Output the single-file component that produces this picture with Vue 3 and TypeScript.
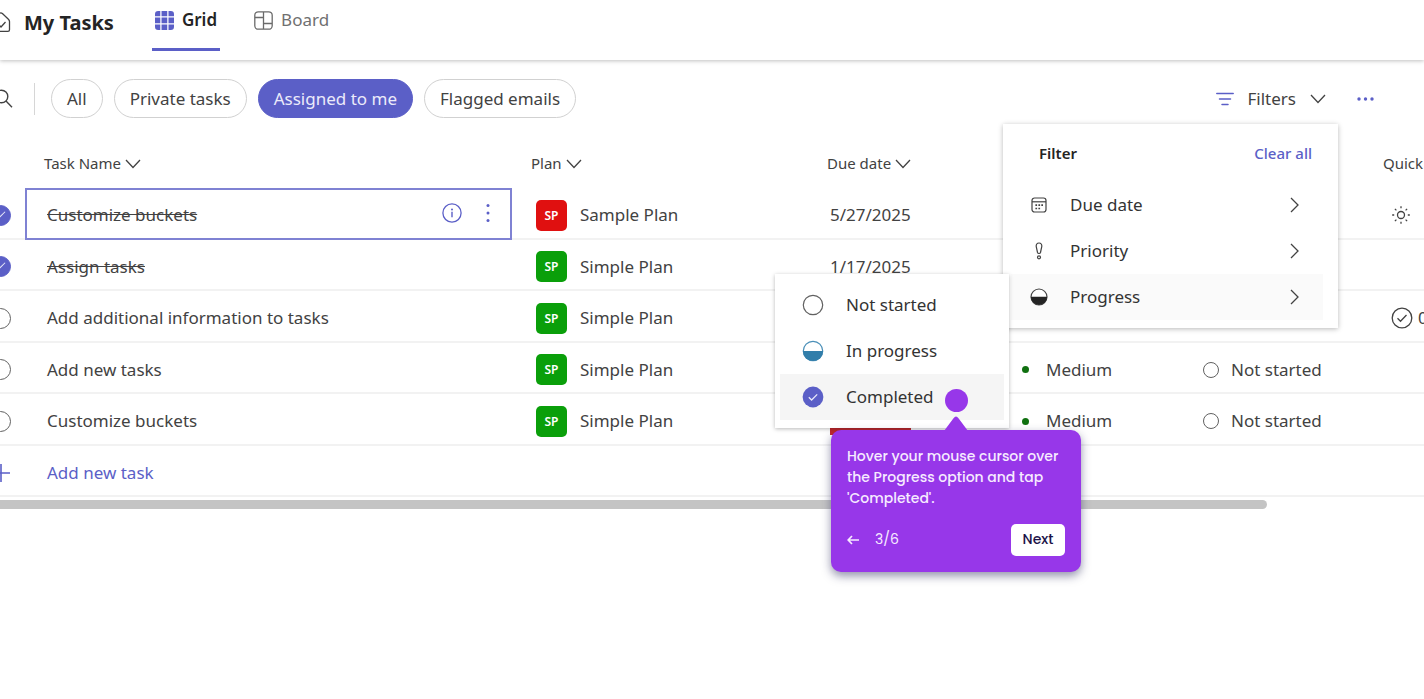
<script setup lang="ts">
import { ref } from 'vue'

interface Task {
  id: number
  name: string
  done: boolean
  plan: string
  sample?: boolean
  due?: string
  late?: boolean
  priority?: string
  progress?: string
  quick?: 'sun' | 'check'
}

const tasks = ref<Task[]>([
  { id: 1, name: 'Customize buckets', done: true, plan: 'Sample Plan', sample: true, due: '5/27/2025', quick: 'sun' },
  { id: 2, name: 'Assign tasks', done: true, plan: 'Simple Plan', due: '1/17/2025' },
  { id: 3, name: 'Add additional information to tasks', done: false, plan: 'Simple Plan', quick: 'check' },
  { id: 4, name: 'Add new tasks', done: false, plan: 'Simple Plan', priority: 'Medium', progress: 'Not started' },
  { id: 5, name: 'Customize buckets', done: false, plan: 'Simple Plan', due: '1/17/2025', late: true, priority: 'Medium', progress: 'Not started' },
])

const chips = ['All', 'Private tasks', 'Assigned to me', 'Flagged emails']
const activeChip = ref('Assigned to me')
</script>

<template>
  <div class="page">
    <header class="topbar">
      <svg class="home" viewBox="9 0 11 24" aria-hidden="true">
        <path d="M1 9.5 8.2 2.6q1.6-1.3 3.2 0l6 5.6q1.1 1 1.1 2.4v8.2q0 1.6-1.6 1.6H2.6M7 13l3 3 4.5-5" />
      </svg>
      <h1>My Tasks</h1>
      <nav class="tabs">
        <a href="#grid" class="tab active">
          <svg viewBox="0 0 18 18" width="19" height="19" aria-hidden="true">
            <path fill="#5b5fc7" d="M3 0h2v5H0V3Q0 0 3 0ZM6.2 0h5.4v5H6.200ZM12.800 0H15q3 0 3 3v2h-5.200ZM0 6.200h5v5.400H0ZM6.200 6.200h5.400v5.400H6.200ZM12.800 6.200H18v5.400h-5.200ZM0 12.800h5V18H3q-3 0-3-3ZM6.200 12.800h5.400V18H6.200ZM12.800 12.800H18V15q0 3-3 3h-2.200Z" />
          </svg>
          Grid
        </a>
        <a href="#board" class="tab">
          <svg viewBox="0 0 19 19" width="19" height="19" fill="none" stroke="#6a6a6a" stroke-width="1.300" aria-hidden="true">
            <rect x="0.800" y="0.800" width="17.400" height="17.400" rx="3.500" />
            <path d="M9.500 1v17M1 6.500h8.500M9.500 12.500H18" />
          </svg>
          Board
        </a>
      </nav>
    </header>

    <div class="toolbar">
      <button class="search" aria-label="Search">
        <svg viewBox="7 0 13 20" width="13" height="20" aria-hidden="true">
          <circle cx="8.500" cy="7.500" r="6.300" />
          <path d="m13 12 6 6.200" />
        </svg>
      </button>
      <span class="divider"></span>
      <button v-for="c in chips" :key="c" class="chip" :class="{ on: c === activeChip }" @click="activeChip = c">{{ c }}</button>

      <div class="filters">
        <button class="filter-btn">
          <svg viewBox="0 0 18 14" width="18" height="14" fill="none" stroke="#5b5fc7" stroke-width="1.500" stroke-linecap="round" aria-hidden="true">
            <path d="M.8 1.500h16.400M3.500 7h11M6 12.500h6" />
          </svg>
          <span>Filters</span>
          <svg class="chev" viewBox="0 0 16 10" width="16" height="10" aria-hidden="true"><path d="m1 1 7 7.500L15 1" /></svg>
        </button>

        <section class="menu">
          <div class="menu-head">
            <strong>Filter</strong>
            <button class="clear">Clear all</button>
          </div>
          <button class="menu-item">
            <svg class="mi" viewBox="0 0 18 18" fill="none" stroke="#424242" stroke-width="1.200" aria-hidden="true">
              <rect x="2" y="2" width="14" height="14" rx="2.500" />
              <path d="M2 5.800h14" />
              <path stroke-width="1.700" d="M5.400 9.200h1.700M8.400 9.200h1.700M11.300 9.200H13M5.400 12.500h1.700M8.400 12.500h1.700" />
            </svg>
            <span>Due date</span>
            <svg class="arrow" viewBox="0 0 9 16" aria-hidden="true"><path d="m1 1 7 7-7 7" /></svg>
          </button>
          <button class="menu-item">
            <svg class="mi" viewBox="0 0 18 18" fill="none" stroke="#424242" stroke-width="1.200" aria-hidden="true">
              <path d="M9 1C7 1 6 2.500 6.200 4.500l1.300 6q.3 1 1.500 1t1.500-1l1.300-6C12 2.500 11 1 9 1Z" />
              <circle cx="9" cy="15.300" r="1.500" />
            </svg>
            <span>Priority</span>
            <svg class="arrow" viewBox="0 0 9 16" aria-hidden="true"><path d="m1 1 7 7-7 7" /></svg>
          </button>
          <div class="has-sub">
            <button class="menu-item hover">
              <svg class="mi" viewBox="0 0 18 18" aria-hidden="true">
                <circle cx="9" cy="9" r="8" fill="#fff" stroke="#424242" stroke-width="1.100" />
                <path d="M.8 8.700h16.400a8.200 8.200 0 0 1-16.400 0Z" fill="#242424" />
              </svg>
              <span>Progress</span>
              <svg class="arrow" viewBox="0 0 9 16" aria-hidden="true"><path d="m1 1 7 7-7 7" /></svg>
            </button>

            <div class="submenu">
              <button class="sub-item">
                <svg viewBox="0 0 22 22" aria-hidden="true"><circle cx="11" cy="11" r="9.700" fill="none" stroke="#616161" stroke-width="1.200" /></svg>
                Not started
              </button>
              <button class="sub-item">
                <svg viewBox="0 0 22 22" aria-hidden="true">
                  <circle cx="11" cy="11" r="9.700" fill="#fff" stroke="#4a8fb8" stroke-width="1.200" />
                  <path d="M.9 11h20.200a10.100 10.100 0 0 1-20.200 0Z" fill="#327eaa" />
                </svg>
                In progress
              </button>
              <div class="has-tip">
                <button class="sub-item hover">
                  <svg viewBox="0 0 22 22" aria-hidden="true">
                    <circle cx="11" cy="11" r="10.400" fill="#5b5fc7" />
                    <path d="m6.800 11.300 2.800 2.700 5.600-5.600" fill="none" stroke="#e8e8fa" stroke-width="1.300" />
                  </svg>
                  Completed
                </button>
                <span class="beacon"></span>
                <aside class="tip">
                  <svg class="tip-arrow" viewBox="0 0 24 15" width="24" height="15" aria-hidden="true">
                    <path d="M0 15 9.500 2.200q2.500-3.400 5 0L24 15Z" fill="#9737e9" />
                  </svg>
                  <p>Hover your mouse cursor over the Progress option and tap 'Completed'.</p>
                  <div class="tip-foot">
                    <button class="back" aria-label="Back">
                      <svg viewBox="0 0 13 10" width="13" height="10" aria-hidden="true"><path d="M12 5H1.500M5 1 1.200 5 5 9" /></svg>
                    </button>
                    <span>3/6</span>
                    <button class="next">Next</button>
                  </div>
                </aside>
              </div>
            </div>
          </div>
        </section>
      </div>

      <button class="more" aria-label="More options">
        <svg viewBox="0 0 17 4" width="17" height="4" fill="#5b5fc7" aria-hidden="true">
          <circle cx="2" cy="2" r="1.700" /><circle cx="8.500" cy="2" r="1.700" /><circle cx="15" cy="2" r="1.700" />
        </svg>
      </button>
    </div>

    <main class="grid-wrap">
      <table>
        <colgroup>
          <col class="c-check" /><col class="c-name" /><col class="c-plan" /><col class="c-due" /><col class="c-prio" /><col class="c-prog" /><col />
        </colgroup>
        <thead>
          <tr>
            <th></th>
            <th v-for="h in ['Task Name', 'Plan', 'Due date']" :key="h" scope="col">
              {{ h }}
              <svg class="chev" viewBox="0 0 16 10" width="16" height="10" aria-hidden="true"><path d="m1 1 7 7.500L15 1" /></svg>
            </th>
            <th></th>
            <th></th>
            <th scope="col">Quick</th>
          </tr>
        </thead>
        <tbody>
          <tr v-for="(t, i) in tasks" :key="t.id">
            <td class="check"><input v-model="t.done" type="checkbox" :aria-label="t.name" /></td>
            <td class="name" :class="{ selected: i === 0 }">
              <div class="cell">
                <span :class="{ struck: t.done }">{{ t.name }}</span>
                <span v-if="i === 0" class="row-actions">
                  <button aria-label="Details">
                    <svg viewBox="0 0 20 20" width="20" height="20" aria-hidden="true">
                      <circle cx="10" cy="10" r="9.100" fill="none" stroke="#5b5fc7" stroke-width="1.300" />
                      <path d="M10 8.700v5.500" stroke="#5b5fc7" stroke-width="1.400" />
                      <circle cx="10" cy="6.400" r="1" fill="#5b5fc7" />
                    </svg>
                  </button>
                  <button aria-label="Task options">
                    <svg viewBox="0 0 4 20" width="4" height="20" fill="#5b5fc7" aria-hidden="true">
                      <circle cx="2" cy="2.500" r="1.500" /><circle cx="2" cy="10" r="1.500" /><circle cx="2" cy="17.500" r="1.500" />
                    </svg>
                  </button>
                </span>
              </div>
            </td>
            <td class="plan">
              <div class="cell"><span class="badge" :class="{ red: t.sample }">SP</span>{{ t.plan }}</div>
            </td>
            <td><span v-if="t.due" :class="{ late: t.late }">{{ t.due }}</span></td>
            <td><div v-if="t.priority" class="cell"><i class="dot"></i>{{ t.priority }}</div></td>
            <td><div v-if="t.progress" class="cell"><i class="ring"></i>{{ t.progress }}</div></td>
            <td class="quick">
              <svg v-if="t.quick === 'sun'" viewBox="0 0 20 20" width="20" height="20" fill="none" stroke="#424242" stroke-width="1.300" aria-hidden="true">
                <circle cx="10" cy="10" r="3.500" />
                <path d="M10 1.200v2M10 16.800v2M1.200 10h2M16.800 10h2M3.900 3.900l1.500 1.500M14.600 14.600l1.500 1.500M3.900 16.100l1.500-1.500M14.600 5.400l1.500-1.500" />
              </svg>
              <div v-else-if="t.quick === 'check'" class="cell">
                <svg viewBox="0 0 22 22" width="22" height="22" fill="none" stroke="#424242" stroke-width="1.300" aria-hidden="true">
                  <circle cx="11" cy="11" r="9.800" />
                  <path d="m6.500 11.300 3 3 6-6.300" />
                </svg>
                0
              </div>
            </td>
          </tr>
          <tr class="add">
            <td><svg viewBox="10 0 11 20" width="11" height="20" fill="none" stroke="#5b5fc7" stroke-width="1.600" aria-hidden="true"><path d="M11 1v18M2 10h18" /></svg></td>
            <td colspan="6"><button class="add-btn">Add new task</button></td>
          </tr>
        </tbody>
      </table>
      <div class="scrollbar"></div>
    </main>
  </div>
</template>

<style>
body { margin: 0; background: #fff; overflow: hidden; }
</style>

<style scoped>
.page {
  min-height: 100vh;
  overflow: hidden;
  background: #fff;
  color: #424242;
  font: 17px/24px "Segoe UI", "Noto Sans", "Open Sans", sans-serif;
}
button {
  font: inherit;
  color: inherit;
  background: none;
  border: 0;
  padding: 0;
  cursor: pointer;
}
svg { display: block; flex: none; }

.topbar {
  display: flex;
  align-items: center;
  height: 60px;
  box-sizing: border-box;
  padding-bottom: 14px;
  box-shadow: 0 1px 4px rgba(0, 0, 0, 0.25);
}
.home { width: 11px; height: 24px; fill: none; stroke: #424242; stroke-width: 1.3; }
h1 { margin: 0 0 0 13px; font-size: 20px; line-height: 28px; font-weight: 700; color: #242424; }
.tabs { display: flex; align-self: flex-start; gap: 31px; margin-left: 38px; }
.tab {
  display: flex;
  align-items: center;
  gap: 8px;
  height: 40px;
  padding: 0 3px 8px;
  color: #707070;
  text-decoration: none;
  border-bottom: 3px solid transparent;
}
.tab.active { color: #242424; font-weight: 600; border-color: #5b5fc7; }

.toolbar { display: flex; align-items: center; gap: 11px; padding: 19px 50px 0 0; height: 39px; }
.search svg { fill: none; stroke: #424242; stroke-width: 1.4; }
.divider { width: 1px; height: 32px; margin: 0 5px 0 10px; background: #d6d6d6; }
.chip {
  height: 39px;
  padding: 0 15px;
  border: 1px solid #d1d1d1;
  border-radius: 20px;
  white-space: nowrap;
}
.chip.on { background: #5b5fc7; border-color: #5b5fc7; color: #ebebfa; }
.filters { position: relative; margin-left: auto; }
.filter-btn { display: flex; align-items: center; gap: 14px; margin-right: 20px; }
.chev { fill: none; stroke: #424242; stroke-width: 1.3; }

.menu {
  position: absolute;
  z-index: 2;
  top: 37px;
  right: 8px;
  width: 335px;
  box-sizing: border-box;
  padding: 11px 15px 8px 8px;
  background: #fff;
  box-shadow: 0 1px 5px rgba(0, 0, 0, 0.28);
}
.menu-head {
  display: flex;
  justify-content: space-between;
  align-items: center;
  height: 36px;
  margin-bottom: 11px;
  padding: 0 11px 0 28px;
  font-size: 15px;
}
.menu-head strong { font-weight: 600; color: #242424; }
.clear { color: #5b5fc7; font-weight: 500; }
.menu-item { display: flex; align-items: center; width: 100%; height: 46px; padding: 0 24px 0 19px; color: #333; }
.menu-item.hover { background: #fafafa; }
.menu-item span { flex: 1; margin-left: 22px; text-align: left; }
.mi { width: 18px; height: 18px; }
.arrow { width: 9px; height: 16px; fill: none; stroke: #424242; stroke-width: 1.3; }
.has-sub, .has-tip { position: relative; }

.submenu {
  position: absolute;
  top: 0;
  right: 100%;
  width: 234px;
  margin-right: 2px;
  box-sizing: border-box;
  padding: 8px 5px;
  background: #fff;
  box-shadow: 0 1px 4px rgba(0, 0, 0, 0.28);
}
.sub-item { display: flex; align-items: center; gap: 22px; width: 100%; height: 46px; padding: 0 22px; color: #333; }
.sub-item.hover { background: #f5f5f5; }
.sub-item svg { width: 22px; height: 22px; }

.beacon {
  position: absolute;
  top: 15px;
  left: 165px;
  width: 23px;
  height: 23px;
  border-radius: 50%;
  background: #9737e9;
}
.tip {
  position: absolute;
  top: 56px;
  left: 51px;
  width: 250px;
  box-sizing: border-box;
  padding: 16px;
  border-radius: 10px;
  background: #9737e9;
  color: #f6ebff;
  box-shadow: 0 4px 10px rgba(40, 40, 90, 0.5);
  font: 500 14px/21px Poppins, Inter, sans-serif;
}
.tip-arrow { position: absolute; top: -14px; left: 113px; }
.tip p { margin: 0 0 15px; }
.tip-foot { display: flex; align-items: center; }
.tip-foot span { margin-left: 15px; font-weight: 400; }
.back svg { fill: none; stroke: #f6ebff; stroke-width: 1.7; }
.next { margin-left: auto; width: 54px; height: 32px; border-radius: 5px; background: #fff; color: #1c1248; }

table { width: 100%; table-layout: fixed; border-collapse: separate; border-spacing: 0; }
.c-check { width: 25px; }
.c-name { width: 487px; }
.c-plan { width: 296px; }
.c-due { width: 192px; }
.c-prio { width: 181px; }
.c-prog { width: 183px; }
th { height: 70px; box-sizing: border-box; padding: 20px 0 0 19px; font-size: 15px; font-weight: 400; text-align: left; white-space: nowrap; }
th .chev { display: inline-block; }
td { height: 51px; box-sizing: border-box; padding: 4px 0 0 22px; border-bottom: 2px solid #f2f2f2; white-space: nowrap; }
tr:nth-child(odd) td { height: 52px; }
td:first-child { padding-left: 0; }
.plan { padding-left: 24px; }
.cell { display: flex; align-items: center; }
.check input {
  appearance: none;
  display: block;
  width: 21px;
  height: 21px;
  margin: 0 0 0 -10px;
  box-sizing: border-box;
  border: 1px solid #616161;
  border-radius: 50%;
}
.check input:checked { border-color: #5b5fc7; background: #5b5fc7; }
.check input:checked::after {
  content: "";
  display: block;
  width: 8px;
  height: 4px;
  margin: 5px 0 0 5px;
  border: solid #ebebfa;
  border-width: 0 0 1px 1px;
  transform: rotate(-45deg);
}
.selected { border: 2px solid #7f82d3; padding: 2px 0 0 20px; }
.struck { text-decoration: line-through; }
.row-actions { display: flex; gap: 24px; margin: 0 20px 0 auto; padding-bottom: 4px; }
.badge {
  width: 31px;
  margin-right: 13px;
  border-radius: 5px;
  background: #0a9f0a;
  color: #fff;
  font-size: 12px;
  line-height: 31px;
  font-weight: 600;
  text-align: center;
}
.badge.red { background: #e01010; }
.late { display: inline-block; line-height: 27px; background: #c4282d; color: #fff; }
.dot { width: 7px; height: 7px; margin-right: 17px; border-radius: 50%; background: #107010; }
.ring { width: 16px; height: 16px; margin-right: 12px; box-sizing: border-box; border: 1px solid #616161; border-radius: 50%; }
.quick { padding-left: 27px; overflow: hidden; }
.quick .cell { gap: 5px; }
.add td { color: #5b5fc7; }
.scrollbar { width: 89%; height: 9px; margin-top: 3px; border-radius: 0 5px 5px 0; background: #c4c4c4; }
</style>
